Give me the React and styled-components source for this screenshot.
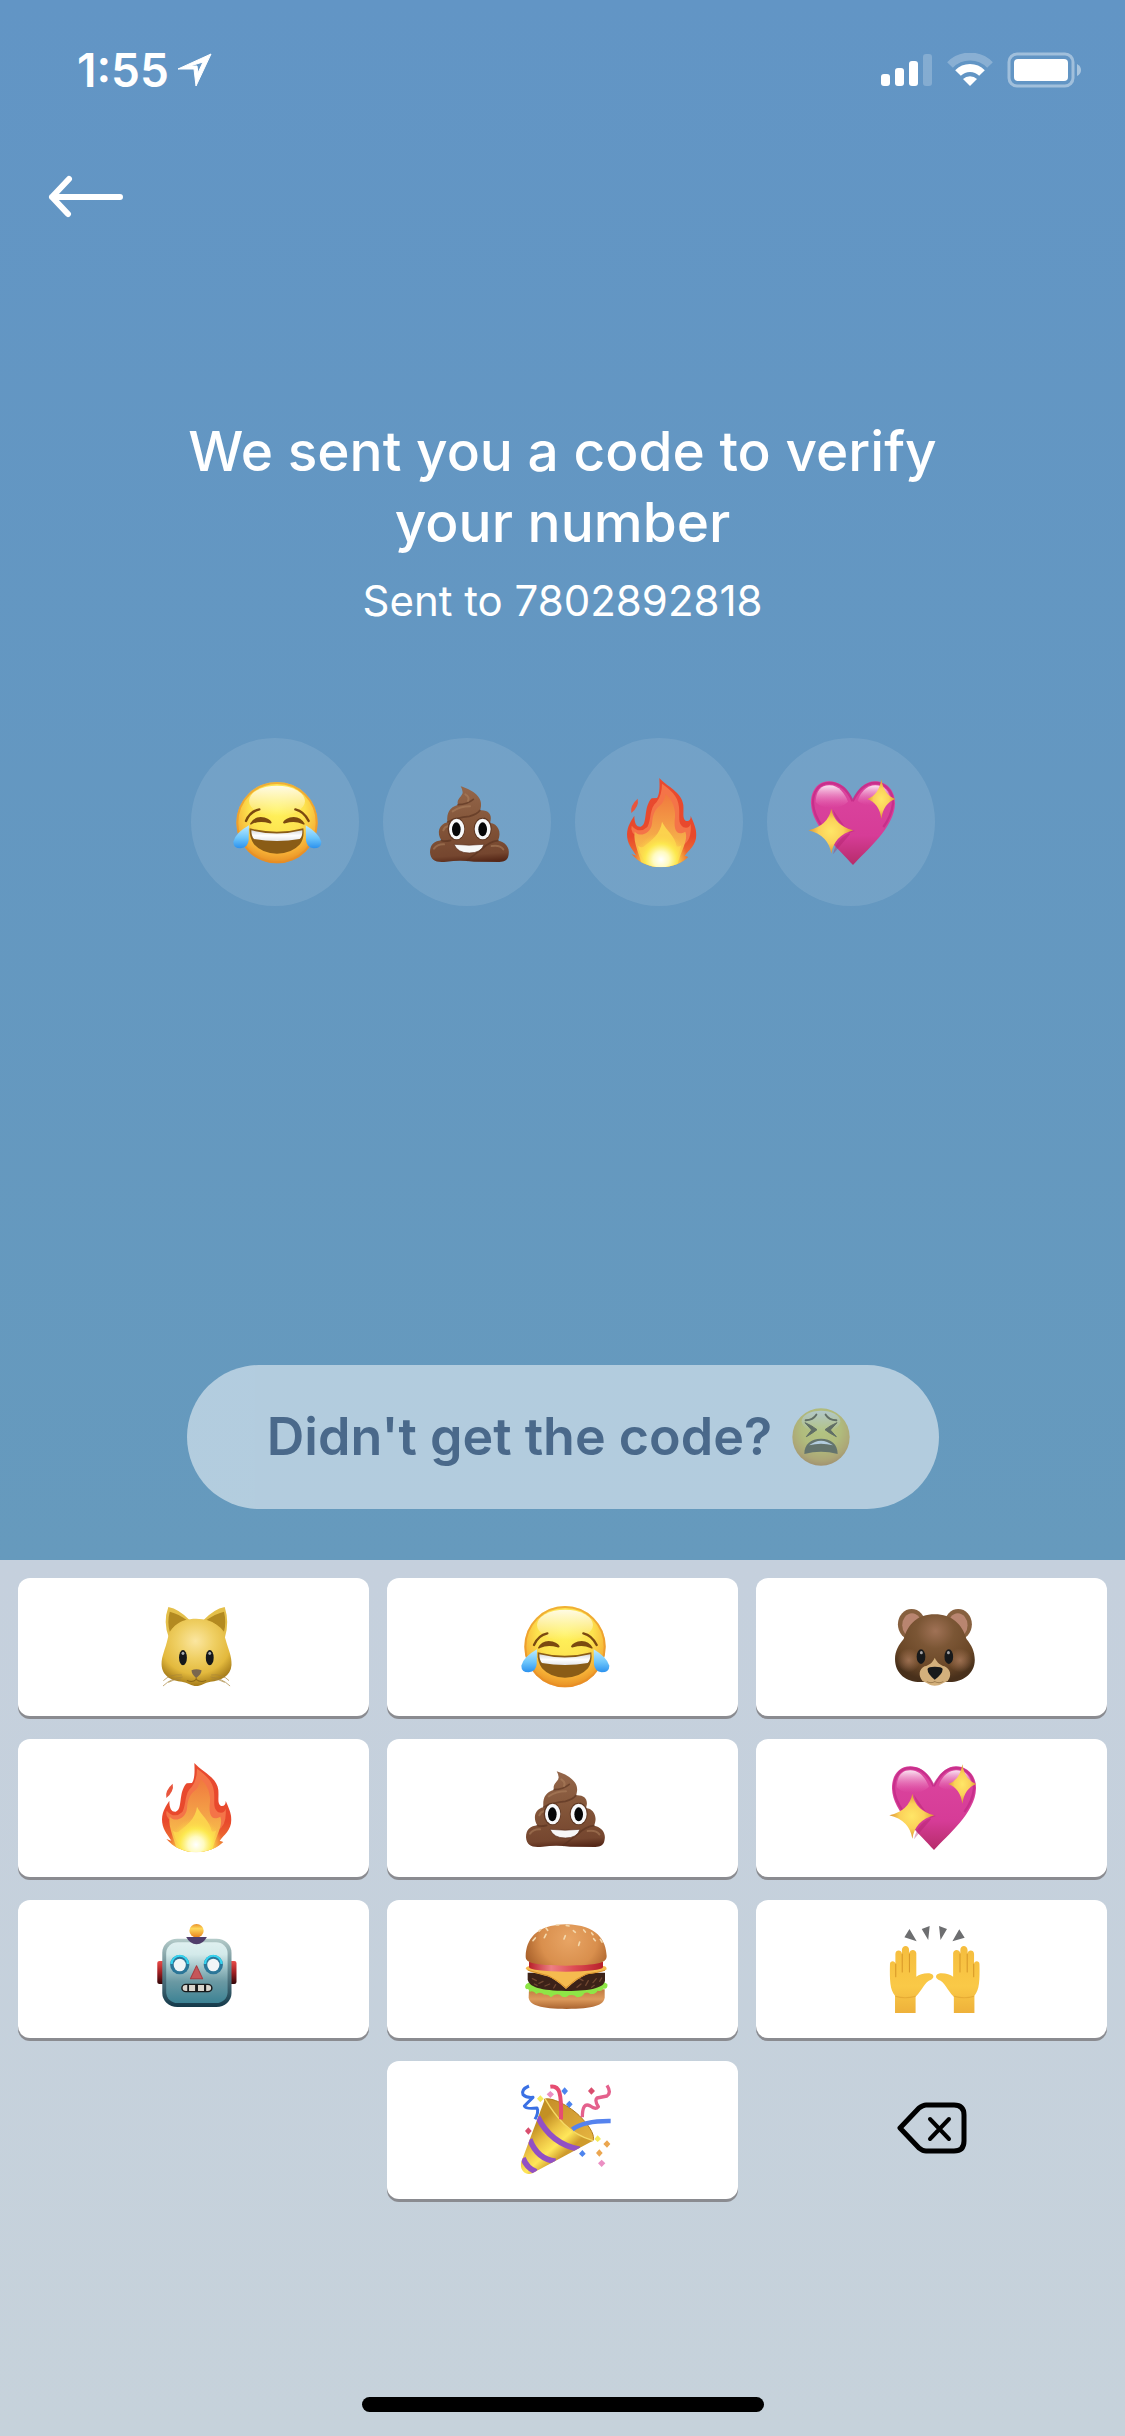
import React from "react";
import styled, { createGlobalStyle } from "styled-components";

const GlobalStyle = createGlobalStyle`
  *, *::before, *::after { box-sizing: border-box; }
  body { margin: 0; background: #c5d1db; }
  button { font: inherit; color: inherit; border: 0; padding: 0; background: none; cursor: pointer; }
`;

const Screen = styled.div`
  min-height: 100vh;
  display: flex;
  flex-direction: column;
  font-family: Inter, "Liberation Sans", sans-serif;
  color: #fff;
  background: linear-gradient(180deg, #6295c5 0, #669abd 1560px);
`;

const StatusBar = styled.header`
  display: flex;
  align-items: center;
  justify-content: space-between;
  height: 140px;
  padding: 0 44px 0 77px;
`;

const StatusGroup = styled.div`
  display: flex;
  align-items: center;
  gap: ${(p) => p.$gap}px;
`;

const Clock = styled.time`
  font-size: 46px;
  line-height: 52px;
  font-weight: 600;
`;

const Nav = styled.nav`
  display: flex;
  padding: 8px 24px;
`;

const BackButton = styled.button`
  display: flex;
  padding: 26px 24px;
`;

const Content = styled.main`
  flex: 1;
  display: flex;
  flex-direction: column;
  align-items: center;
  padding: 164px 24px 51px;
`;

const Title = styled.h1`
  max-width: 800px;
  margin: 0;
  font-size: 55px;
  line-height: 71px;
  font-weight: 500;
  text-align: center;
`;

const Subtitle = styled.p`
  margin: 17px 0 0;
  font-size: 42px;
  line-height: 52px;
  font-weight: 400;
`;

const CodeSlots = styled.ul`
  display: flex;
  gap: 24px;
  margin: 111px 0 64px;
  padding: 0;
  list-style: none;
`;

const Slot = styled.li`
  display: flex;
  align-items: center;
  justify-content: center;
  width: 168px;
  height: 168px;
  padding-left: 4px;
  border-radius: 50%;
  background: rgba(255, 255, 255, 0.1);
`;

const ResendButton = styled.button`
  display: flex;
  align-items: center;
  justify-content: center;
  gap: 20px;
  min-width: 752px;
  height: 144px;
  margin-top: auto;
  padding: 0 8px 0 0;
  border-radius: 72px;
  background: #fff;
  color: #303a59;
  opacity: 0.5;
  font-size: 52px;
  line-height: 64px;
  font-weight: 600;
`;

const Keyboard = styled.section`
  display: flex;
  flex-direction: column;
  align-items: center;
  padding: 18px 18px 24px;
  background: linear-gradient(180deg, #c5d0dd, #c6d2db);
`;

const KeyGrid = styled.div`
  display: grid;
  grid-template-columns: repeat(3, 1fr);
  gap: 23px 18px;
  width: 100%;
`;

const Key = styled.button`
  display: flex;
  align-items: center;
  justify-content: center;
  height: 138px;
  padding: 0 0 2px 4px;
  border-radius: 12px;
  background: #fff;
  box-shadow: 0 3px 0 #8a8b90;
`;

const DeleteKey = styled(Key)`
  padding: 0 0 4px;
  background: none;
  box-shadow: none;
`;

const Blank = styled.span``;

const HomeIndicator = styled.div`
  width: 402px;
  height: 15px;
  margin-top: 198px;
  border-radius: 8px;
  background: #000;
`;

const Picture = styled.svg`
  display: block;
  flex: none;
  width: ${(p) => p.$size}px;
  height: ${(p) => p.$size}px;
`;

/* Emoji artwork */

const JoyArt = () => (
  <>
    <defs>
      <radialGradient id="joyFace" gradientUnits="userSpaceOnUse" cx="291" cy="236" r="166">
        <stop offset="0" stopColor="#fff35c" />
        <stop offset=".5" stopColor="#fde24e" />
        <stop offset=".8" stopColor="#f6b036" />
        <stop offset="1" stopColor="#e58a22" />
      </radialGradient>
      <linearGradient id="joyShine" x1="0" y1="0" x2="0" y2="1">
        <stop offset="0" stopColor="#fff" stopOpacity=".85" />
        <stop offset="1" stopColor="#fff" stopOpacity="0" />
      </linearGradient>
      <linearGradient id="joyTear" x1="0" y1="0" x2="0" y2="1">
        <stop offset="0" stopColor="#bdebff" />
        <stop offset=".55" stopColor="#6cc5fb" />
        <stop offset="1" stopColor="#2b91ee" />
      </linearGradient>
      <linearGradient id="joyTeeth" x1="0" y1="0" x2="0" y2="1">
        <stop offset="0" stopColor="#d9dadd" />
        <stop offset=".5" stopColor="#fff" />
        <stop offset="1" stopColor="#e4e5e8" />
      </linearGradient>
    </defs>
    <circle cx="291" cy="277" r="122" fill="url(#joyFace)" />
    <circle cx="291" cy="277" r="119" fill="none" stroke="#e88c24" strokeWidth="6" opacity=".6" />
    <ellipse cx="291" cy="212" rx="84" ry="46" fill="url(#joyShine)" />
    <path d="M198 272Q210 243 238 237M386 272Q372 243 346 237" fill="none" stroke="#7b4a10" strokeWidth="7" strokeLinecap="round" />
    <path d="M210 280Q220 261 242 260Q268 262 275 276Q274 281 268 279Q240 270 216 281Q210 285 210 280Z" fill="#7b4a10" />
    <path d="M374 280Q363 261 341 260Q316 262 309 276Q310 281 316 279Q344 270 367 281Q374 285 374 280Z" fill="#7b4a10" />
    <path d="M209 294Q291 315 370 294Q374 322 360 342Q335 370 291 370Q247 370 222 342Q207 320 209 294Z" fill="#8a5c16" />
    <path d="M214 300Q291 319 367 300Q368 318 359 326Q291 338 222 326Q214 318 214 300Z" fill="url(#joyTeeth)" />
    <path d="M207 285Q166 308 160 334Q160 354 182 354Q204 352 206 330Z" fill="url(#joyTear)" />
    <path d="M377 285Q416 308 424 334Q424 354 401 354Q380 352 378 330Z" fill="url(#joyTear)" />
  </>
);

const PoopArt = () => (
  <>
    <defs>
      <linearGradient id="poopBody" gradientUnits="userSpaceOnUse" x1="850" y1="170" x2="866" y2="396">
        <stop offset="0" stopColor="#94664a" />
        <stop offset=".5" stopColor="#835539" />
        <stop offset=".9" stopColor="#75462f" />
        <stop offset="1" stopColor="#562818" />
      </linearGradient>
    </defs>
    <path
      d="M842 168C870 176 908 196 903 228Q902 236 900 240C922 238 936 250 932 270L930 278C954 280 966 306 954 331C974 334 990 350 986 372C984 390 974 395 958 395L882 394Q840 388 800 394C770 398 752 392 750 366C750 342 764 332 784 330C770 308 776 282 802 276C800 246 808 232 834 223C828 206 848 198 848 186Q847 176 842 168Z"
      fill="url(#poopBody)"
    />
    <path d="M834 223Q862 222 880 207M803 275Q830 262 868 258Q892 252 900 240M784 330Q792 335 812 330M930 278Q920 275 914 264M954 331Q930 333 904 357L862 390" fill="none" stroke="#57301e" strokeWidth="5" strokeLinecap="round" opacity=".6" />
    <path d="M818 243Q840 228 870 228M856 192Q870 200 864 212M762 355Q772 341 792 342M790 300Q794 289 804 288M935 347Q960 343 970 357" fill="none" stroke="#b18662" strokeWidth="6" strokeLinecap="round" opacity=".5" />
    <ellipse cx="829" cy="296" rx="26" ry="34" fill="#5d3723" />
    <ellipse cx="908" cy="296" rx="27" ry="34" fill="#5d3723" />
    <ellipse cx="830" cy="296" rx="23" ry="31" fill="#f7f8fa" />
    <ellipse cx="908" cy="296" rx="24" ry="31" fill="#f7f8fa" />
    <ellipse cx="829" cy="297" rx="13" ry="21" fill="#050608" />
    <ellipse cx="908" cy="297" rx="13" ry="21" fill="#050608" />
    <path d="M822 342Q868 347 912 342Q904 368 868 368Q832 368 822 342Z" fill="#f7f7f7" stroke="#5b311f" strokeWidth="2" />
  </>
);

const FireArt = () => (
  <>
    <defs>
      <linearGradient id="fireOuter" x1="0" y1="0" x2="0" y2="1">
        <stop offset="0" stopColor="#e84a30" />
        <stop offset=".65" stopColor="#e8492c" />
        <stop offset="1" stopColor="#f08a35" />
      </linearGradient>
      <linearGradient id="fireInner" x1="0" y1="0" x2="0" y2="1">
        <stop offset="0" stopColor="#f0793e" />
        <stop offset=".5" stopColor="#f4a348" />
        <stop offset="1" stopColor="#fbd34e" />
      </linearGradient>
      <radialGradient id="fireGlow" gradientUnits="userSpaceOnUse" cx="303" cy="388" r="80">
        <stop offset="0" stopColor="#fff" />
        <stop offset=".3" stopColor="#fffbc0" />
        <stop offset=".6" stopColor="#fdec50" stopOpacity=".85" />
        <stop offset="1" stopColor="#fbc645" stopOpacity="0" />
      </radialGradient>
      <clipPath id="fireClip">
        <path d="M298 143C320 168 366 186 370 224C372 250 366 264 378 272C388 274 393 266 392 256C400 275 410 295 409 315C408 345 388 358 374 376L385 380C370 395 340 410 303 411C265 410 235 395 214 371L229 376C215 355 201 340 201 312C202 285 215 270 223 256C223 280 230 290 242 289C256 286 255 260 259 240C262 222 270 208 275 204L291 203C300 190 299 165 298 143Z" />
      </clipPath>
    </defs>
    <g clipPath="url(#fireClip)">
      <rect x="195" y="140" width="220" height="275" fill="url(#fireOuter)" />
      <path d="M306 160C330 178 354 195 357 230C360 260 352 278 370 291Q388 296 392 280Q396 330 368 345L330 320L240 320Q208 310 215 286Q238 312 262 290C274 270 268 232 290 215Q306 194 306 160Z" fill="#f47448" />
      <path d="M316 190C336 206 350 236 344 270C342 300 350 318 376 304C386 330 362 362 350 410L246 410C244 380 218 340 224 304C240 322 272 310 276 280C279 250 284 238 304 222Q315 208 316 190Z" fill="url(#fireInner)" />
      <path d="M306 274C318 300 345 316 350 348Q360 350 364 344Q352 392 330 410H274C252 394 240 372 234 346Q246 356 254 346C274 330 302 310 306 274Z" fill="#fdd94f" opacity=".85" />
      <rect x="195" y="290" width="220" height="125" fill="url(#fireGlow)" />
    </g>
    <path d="M233 205Q238 228 214 248Q209 226 233 205Z" fill="#e8553d" />
  </>
);

const HeartArt = () => (
  <>
    <defs>
      <linearGradient id="heartBody" x1="0" y1="0" x2="0" y2="1">
        <stop offset="0" stopColor="#dc459f" />
        <stop offset=".65" stopColor="#d63c97" />
        <stop offset="1" stopColor="#b62c6a" />
      </linearGradient>
      <linearGradient id="heartShine" x1="0" y1="0" x2="0" y2="1">
        <stop offset="0" stopColor="#fff" stopOpacity=".85" />
        <stop offset="1" stopColor="#ef78bf" stopOpacity="0" />
      </linearGradient>
      <radialGradient id="heartStar">
        <stop offset="0" stopColor="#ffe667" />
        <stop offset=".55" stopColor="#fbd159" />
        <stop offset="1" stopColor="#dc9332" />
      </radialGradient>
    </defs>
    <path d="M878 210C860 166 832 153 808 153C770 153 752 185 753 220C755 290 840 358 879 404C920 358 1003 292 1005 220C1006 176 975 153 945 153C915 153 895 176 878 210Z" fill="url(#heartBody)" />
    <path d="M878 213C860 171 834 158 808 158C774 158 758 188 759 220C761 246 772 268 786 288M878 213C895 177 918 158 945 158C974 158 1000 180 999 220C996 246 985 270 970 290" fill="none" stroke="#c22986" strokeWidth="7" opacity=".75" />
    <path d="M767 215C768 182 782 165 808 165C838 165 854 190 864 214C840 238 790 240 767 215Z" fill="url(#heartShine)" />
    <path d="M893 212C900 188 920 165 946 165C972 165 988 182 992 208C970 225 920 234 893 212Z" fill="url(#heartShine)" />
    <path d="M819 238Q828 286 884 302Q830 318 819 372L870 312Z" fill="#a81e68" opacity=".35" />
    <path d="M814 235Q823 285 880 300Q823 315 814 370Q805 315 745 300Q805 285 814 235Z" fill="url(#heartStar)" />
    <path d="M964 147Q971 194 1006 206Q971 218 964 265Q957 218 922 206Q957 194 964 147Z" fill="url(#heartStar)" />
  </>
);

const CatArt = () => (
  <>
    <defs>
      <radialGradient id="catFace" gradientUnits="userSpaceOnUse" cx="546" cy="276" r="132">
        <stop offset="0" stopColor="#fbe6a0" />
        <stop offset=".4" stopColor="#efcf63" />
        <stop offset=".75" stopColor="#e3b93d" />
        <stop offset="1" stopColor="#a97f1c" />
      </radialGradient>
    </defs>
    <path d="M470 174Q500 180 530 214L472 268Q454 220 470 174ZM628 174Q598 180 568 214L628 268Q642 220 628 174Z" fill="#e4bf4a" />
    <path d="M474 188Q500 195 522 214Q488 226 474 248Q466 220 474 188ZM626 188Q600 195 576 214Q612 226 626 248Q633 220 626 188Z" fill="#b38a21" />
    <path d="M548 209C596 209 622 234 630 270C638 302 648 320 647 348C645 382 616 396 588 398C572 401 562 411 548 411C536 411 524 401 508 398C480 396 452 382 451 346C451 320 462 300 468 270C476 234 500 209 548 209Z" fill="url(#catFace)" />
    <ellipse cx="511" cy="326" rx="11" ry="23" fill="#16181b" />
    <ellipse cx="586" cy="326" rx="11" ry="23" fill="#16181b" />
    <ellipse cx="511" cy="313" rx="4" ry="5" fill="#a7abb0" />
    <ellipse cx="586" cy="313" rx="4" ry="5" fill="#a7abb0" />
    <path d="M535 364Q548 357 563 364Q563 376 548 387Q535 376 535 364Z" fill="#7a674e" />
    <path d="M548 386V391M548 391Q538 402 522 394M548 391Q560 402 576 394" fill="none" stroke="#8d6919" strokeWidth="3" />
    <path d="M508 378Q476 374 456 395M510 384Q480 386 455 411M506 390Q486 390 470 400M590 378Q622 374 640 395M588 384Q618 386 643 411M592 390Q612 390 628 400" fill="none" stroke="#a8853a" strokeWidth="2" />
  </>
);

const BearArt = () => (
  <>
    <defs>
      <radialGradient id="bearFace" gradientUnits="userSpaceOnUse" cx="1040" cy="246" r="150">
        <stop offset="0" stopColor="#a07256" />
        <stop offset=".35" stopColor="#7b5635" />
        <stop offset=".75" stopColor="#6a4727" />
        <stop offset="1" stopColor="#48301b" />
      </radialGradient>
      <radialGradient id="bearCheek">
        <stop offset="0" stopColor="#a8795b" stopOpacity=".8" />
        <stop offset="1" stopColor="#a8795b" stopOpacity="0" />
      </radialGradient>
    </defs>
    <ellipse cx="974" cy="226" rx="38" ry="46" fill="#87603f" />
    <ellipse cx="1103" cy="226" rx="38" ry="46" fill="#87603f" />
    <ellipse cx="975" cy="229" rx="27" ry="36" fill="#b98570" />
    <ellipse cx="1102" cy="229" rx="27" ry="36" fill="#b98570" />
    <path d="M1038 196C1085 196 1114 225 1126 270C1140 288 1149 308 1149 333C1149 375 1115 399 1080 399H998C960 399 928 375 928 330C928 306 938 288 952 270C964 225 990 196 1038 196Z" fill="url(#bearFace)" />
    <ellipse cx="966" cy="334" rx="32" ry="36" fill="url(#bearCheek)" />
    <ellipse cx="1108" cy="334" rx="34" ry="36" fill="url(#bearCheek)" />
    <ellipse cx="1000" cy="323" rx="12" ry="22" fill="#17191b" />
    <ellipse cx="1077" cy="323" rx="12" ry="22" fill="#17191b" />
    <ellipse cx="1001" cy="311" rx="4" ry="5" fill="#a5a5a7" />
    <ellipse cx="1076" cy="311" rx="4" ry="5" fill="#a5a5a7" />
    <path d="M1038 326C1046 343 1054 348 1065 352C1082 360 1086 380 1074 396C1060 402 1054 410 1038 410C1024 410 1017 402 1004 396C992 380 994 360 1010 352C1022 348 1031 343 1038 326Z" fill="#d3b07c" />
    <path d="M1018 360Q1020 353 1038 353Q1058 353 1060 360Q1060 375 1038 392Q1018 375 1018 360Z" fill="#17191b" />
    <path d="M1016 398Q1028 404 1038 398Q1050 404 1062 398" fill="none" stroke="#9c7b4d" strokeWidth="3" />
  </>
);

const RobotArt = () => (
  <>
    <defs>
      <linearGradient id="robotFace" x1="0" y1="0" x2="0" y2="1">
        <stop offset="0" stopColor="#dff0f0" />
        <stop offset=".2" stopColor="#d3eaea" />
        <stop offset=".65" stopColor="#6a99a3" />
        <stop offset="1" stopColor="#3c8294" />
      </linearGradient>
      <linearGradient id="robotEdge" x1="0" y1="0" x2="0" y2="1">
        <stop offset="0" stopColor="#b5ccca" />
        <stop offset=".5" stopColor="#5a7f89" />
        <stop offset="1" stopColor="#14394a" />
      </linearGradient>
      <linearGradient id="robotEar" x1="0" y1="0" x2="0" y2="1">
        <stop offset="0" stopColor="#ea4b48" />
        <stop offset=".5" stopColor="#9f1e22" />
        <stop offset="1" stopColor="#330608" />
      </linearGradient>
      <linearGradient id="robotBall" x1="0" y1="0" x2="0" y2="1">
        <stop offset="0" stopColor="#e9912a" />
        <stop offset=".35" stopColor="#ffd95b" />
        <stop offset="1" stopColor="#e8821d" />
      </linearGradient>
    </defs>
    <rect x="439" y="243" width="24" height="69" rx="6" fill="url(#robotEar)" />
    <rect x="637" y="243" width="24" height="69" rx="6" fill="url(#robotEar)" />
    <rect x="453" y="176" width="194" height="205" rx="42" fill="url(#robotEdge)" />
    <rect x="464" y="187" width="172" height="182" rx="32" fill="url(#robotFace)" />
    <circle cx="549" cy="152" r="20" fill="url(#robotBall)" />
    <path d="M520 171H578Q568 192 549 193Q530 192 520 171Z" fill="#4f3d6b" />
    <ellipse cx="502" cy="254" rx="27" ry="29" fill="#2b7698" />
    <ellipse cx="596" cy="254" rx="27" ry="29" fill="#2b7698" />
    <path d="M479 252A23 25 0 0 1 525 252M573 252A23 25 0 0 1 619 252" fill="none" stroke="#35d4f0" strokeWidth="6" />
    <ellipse cx="502" cy="255" rx="17" ry="19" fill="#f0f5f7" />
    <ellipse cx="596" cy="255" rx="17" ry="19" fill="#f0f5f7" />
    <path d="M549 257L566 296H532Z" fill="#c5575a" stroke="#a93a40" strokeWidth="3" strokeLinejoin="round" />
    <rect x="506" y="311" width="88" height="26" rx="13" fill="#17191b" />
    <path d="M523 315H519Q510 315 510 324Q510 333 519 333H523ZM528 315H545V333H528ZM553 315H570V333H553ZM576 315H580Q590 315 590 324Q590 333 580 333H576Z" fill="#dad6ce" />
  </>
);

const BurgerArt = () => (
  <>
    <defs>
      <radialGradient id="bunTop" gradientUnits="userSpaceOnUse" cx="190" cy="88" r="140">
        <stop offset="0" stopColor="#e8a565" />
        <stop offset=".6" stopColor="#d98f4d" />
        <stop offset="1" stopColor="#a8602a" />
      </radialGradient>
      <linearGradient id="bunBottom" x1="0" y1="0" x2="0" y2="1">
        <stop offset="0" stopColor="#bf7a40" />
        <stop offset=".5" stopColor="#dd9a5c" />
        <stop offset="1" stopColor="#a9632f" />
      </linearGradient>
      <linearGradient id="tomato" x1="0" y1="0" x2="1" y2="0">
        <stop offset="0" stopColor="#b81f2a" />
        <stop offset=".3" stopColor="#ee7f84" />
        <stop offset=".6" stopColor="#de4d55" />
        <stop offset="1" stopColor="#b81f2a" />
      </linearGradient>
    </defs>
    <path d="M70 238H297V262C296 286 262 297 183 297C106 297 70 286 69 262Z" fill="url(#bunBottom)" />
    <path d="M62 222Q54 232 63 238Q70 235 72 246Q82 240 92 252Q104 244 116 254Q128 252 136 262Q148 250 162 254Q176 268 190 256Q204 252 214 262Q230 262 236 250Q246 244 254 252Q268 254 276 242Q288 246 292 236Q308 238 305 222L290 214H76Z" fill="#8ee646" />
    <path d="M66 188H298V212C294 232 262 242 182 243C104 242 70 232 66 208Z" fill="#3c2218" />
    <path d="M80 206L92 212M100 220L112 214M118 228L132 222M144 234L150 224M86 222L94 226M214 232L226 222M240 226L248 212M262 218L272 206M282 214L288 204M232 212L222 206M258 232L266 226" stroke="#704731" strokeWidth="4" strokeLinecap="round" />
    <path d="M60 176Q62 168 74 168H292Q303 168 303 178C290 188 256 190 242 194Q215 205 181 237Q145 205 125 199C100 190 70 188 60 176Z" fill="#f5bb4f" />
    <path d="M66 180Q110 193 128 197Q155 210 181 233Q212 204 242 192Q276 188 298 181" fill="none" stroke="#d9922d" strokeWidth="3" />
    <path d="M70 155H292V172Q286 184 181 185Q76 184 70 172Z" fill="url(#tomato)" />
    <path d="M60 138C62 92 86 45 181 43C276 45 301 92 303 138C303 160 278 165 181 167C82 165 59 160 60 138Z" fill="url(#bunTop)" />
    <path d="M82 92L89 84M116 83L121 73M121 54L126 61M175 87L179 77M203 62L209 67M152 45H159M182 46L190 48M219 106L222 96M234 60L239 66M258 69L262 74M264 86L269 92M284 88L289 96M100 63L105 59" stroke="#f4d8ac" strokeWidth="5" strokeLinecap="round" />
  </>
);

const PartyArt = () => (
  <>
    <defs>
      <linearGradient id="cone" gradientUnits="userSpaceOnUse" x1="85" y1="650" x2="165" y2="740">
        <stop offset="0" stopColor="#c39024" />
        <stop offset=".35" stopColor="#e9bf42" />
        <stop offset=".7" stopColor="#ffe75a" />
        <stop offset="1" stopColor="#cf9b2c" />
      </linearGradient>
      <linearGradient id="coneMouth" x1="0" y1="0" x2="1" y2="1">
        <stop offset="0" stopColor="#c58c28" />
        <stop offset="1" stopColor="#e6b540" />
      </linearGradient>
      <clipPath id="coneClip">
        <path d="M118 564C150 620 190 668 262 690L80 788C60 796 42 780 46 756Z" />
      </clipPath>
    </defs>
    <path d="M116 566C134 558 190 582 228 622C256 652 268 676 262 690C244 696 150 640 116 566Z" fill="url(#coneMouth)" stroke="#b17a1c" strokeWidth="3" />
    <g clipPath="url(#coneClip)">
      <rect x="40" y="560" width="230" height="235" fill="url(#cone)" />
      <path d="M96 618C120 668 160 704 222 716M72 686C88 728 112 748 150 752M52 742C60 764 72 776 92 784" fill="none" stroke="#9250c4" strokeWidth="17" />
    </g>
    <path d="M118 564C150 620 190 668 262 690" fill="none" stroke="#f6da65" strokeWidth="4" />
    <path d="M134 528C162 524 168 546 166 626" fill="none" stroke="#e64d72" strokeWidth="12" />
    <path d="M200 656Q236 630 315 631" fill="none" stroke="#5583ee" strokeWidth="14" />
    <path d="M70 526Q46 536 52 552Q62 562 82 560Q70 572 56 586Q60 596 94 592Q100 604 88 626" fill="none" stroke="#3a70e4" strokeWidth="9" strokeLinejoin="round" />
    <path d="M304 524Q318 546 304 556L274 562Q266 570 278 588Q270 598 254 586Q230 572 230 620" fill="none" stroke="#e4608c" strokeWidth="10" strokeLinejoin="round" />
    <path d="M177 530L187 541L177 553L167 541ZM191 570L201 581L191 592L181 581ZM230 718L240 729L230 739L220 729Z" fill="#4d84ee" />
    <path d="M104 554L114 564L104 575L94 564ZM276 674L286 685L276 694L266 685Z" fill="#f5ea59" />
    <path d="M134 541L145 551L134 562L123 551ZM288 747L299 758L288 769L277 758Z" fill="#eb8fc3" />
    <path d="M68 650L78 661L68 672L58 661ZM257 530L268 541L257 552L247 541Z" fill="#d94e6e" />
    <path d="M304 689L314 700L304 711L293 700ZM281 716L291 727L281 738L271 727Z" fill="#eba650" />
  </>
);

const Hand = () => (
  <>
    <path
      d="M928 399V347C914 330 913 300 914 252C914 241 929 241 929 252V222C929 208 947 208 947 222V210C948 194 967 194 967 210V220C970 205 987 208 987 220V290C995 284 1008 279 1023 280C1036 282 1038 294 1028 299C1010 305 1004 330 985 350V399Z"
      fill="url(#handSkin)"
    />
    <path d="M930 252V290M948 222V276M968 222V276" fill="none" stroke="#d99a29" strokeWidth="3" strokeLinecap="round" />
    <path d="M929 349Q955 358 985 349" fill="none" stroke="#dfa22f" strokeWidth="3" opacity=".7" />
  </>
);

const HandsArt = () => (
  <>
    <defs>
      <linearGradient id="handSkin" x1="0" y1="0" x2="0" y2="1">
        <stop offset="0" stopColor="#f5bd3e" />
        <stop offset=".6" stopColor="#fac947" />
        <stop offset="1" stopColor="#eeb13a" />
      </linearGradient>
    </defs>
    <Hand />
    <g transform="translate(2076 0) scale(-1 1)">
      <Hand />
    </g>
    <path d="M968 147L988 184L954 172ZM1002 147L1024 138L1020 180ZM1072 147L1050 138L1054 180ZM1106 148L1121 173L1087 184Z" fill="#6d6e70" />
  </>
);

const TiredArt = () => (
  <>
    <defs>
      <radialGradient id="tiredFace" gradientUnits="userSpaceOnUse" cx="128" cy="100" r="116">
        <stop offset="0" stopColor="#fff04a" />
        <stop offset=".5" stopColor="#fbdf3e" />
        <stop offset=".8" stopColor="#f2b432" />
        <stop offset="1" stopColor="#d98426" />
      </radialGradient>
      <linearGradient id="tiredShine" x1="0" y1="0" x2="0" y2="1">
        <stop offset="0" stopColor="#fff" stopOpacity=".8" />
        <stop offset="1" stopColor="#fff" stopOpacity="0" />
      </linearGradient>
    </defs>
    <circle cx="128" cy="125" r="86" fill="url(#tiredFace)" />
    <ellipse cx="128" cy="78" rx="58" ry="32" fill="url(#tiredShine)" />
    <path d="M82 75Q104 74 114 58M174 75Q152 74 142 58" fill="none" stroke="#5d4510" strokeWidth="6" strokeLinecap="round" />
    <path d="M80 82Q100 90 116 103Q102 114 84 124L100 104ZM176 82Q156 90 140 103Q154 114 174 124L156 104Z" fill="#5d4510" stroke="#5d4510" strokeWidth="3" strokeLinejoin="round" />
    <path d="M78 176C78 146 98 130 128 130C158 130 178 146 178 176Q128 162 78 176Z" fill="#64501f" />
    <path d="M92 150Q128 122 164 150Q128 140 92 150Z" fill="#fff" />
  </>
);

const ART = {
  joy: { name: "Face with tears of joy", box: "147 131 288 288", Art: JoyArt },
  poop: { name: "Pile of poo", box: "723 131 288 288", Art: PoopArt },
  fire: { name: "Fire", box: "159 131 288 288", Art: FireArt },
  heart: { name: "Sparkling heart", box: "735 131 288 288", Art: HeartArt },
  cat: { name: "Cat", box: "413 147 269 288", Art: CatArt },
  bear: { name: "Bear", box: "903 147 266 288", Art: BearArt },
  robot: { name: "Robot", box: "413 120 269 288", Art: RobotArt },
  burger: { name: "Hamburger", box: "34 30 288 288", Art: BurgerArt },
  hands: { name: "Raising hands", box: "903 120 266 288", Art: HandsArt },
  party: { name: "Party popper", box: "34 511 288 288", Art: PartyArt },
  tired: { name: "Tired face", box: "41 38 174 174", Art: TiredArt },
};

function Emoji({ kind, size = 96 }) {
  const { name, box, Art } = ART[kind];
  return (
    <Picture $size={size} viewBox={box} preserveAspectRatio="none" role="img" aria-label={name}>
      <Art />
    </Picture>
  );
}

const LocationIcon = () => (
  <svg width="36" height="36" viewBox="0 0 36 36" role="img" aria-label="Location in use">
    <path
      d="M34 2L1 17H17L19 34ZM26 10L21 21L20 14L13 14Z"
      fill="#fff"
      fillRule="evenodd"
      stroke="#fff"
      strokeWidth="1"
      strokeLinejoin="round"
    />
  </svg>
);

const SignalIcon = () => (
  <svg width="52" height="34" viewBox="0 0 52 34" fill="#fff" role="img" aria-label="Signal">
    <rect x="0" y="21" width="9" height="12" rx="3" />
    <rect x="14" y="15" width="9" height="18" rx="3" />
    <rect x="28" y="8" width="9" height="25" rx="3" />
    <rect x="42" y="1" width="9" height="32" rx="3" opacity=".22" />
  </svg>
);

const WifiIcon = () => (
  <svg width="46" height="34" viewBox="0 0 46 34" fill="none" stroke="#fff" role="img" aria-label="Wi-Fi">
    <path d="M3 12A28 28 0 0 1 43 12" strokeWidth="8" opacity=".25" />
    <path d="M11 20A17 17 0 0 1 35 20" strokeWidth="8" />
    <path d="M23 33L16 26A10 10 0 0 1 30 26Z" fill="#fff" stroke="none" />
  </svg>
);

const BatteryIcon = () => (
  <svg width="74" height="36" viewBox="0 0 74 36" fill="#fff" role="img" aria-label="Battery">
    <rect x="2" y="2" width="64" height="32" rx="8" fill="none" stroke="#fff" strokeWidth="3" opacity=".4" />
    <rect x="7" y="7" width="54" height="22" rx="4" />
    <path d="M70 12Q74 14 74 18Q74 22 70 24Z" opacity=".45" />
  </svg>
);

const BackIcon = () => (
  <svg width="76" height="44" viewBox="0 0 76 44" fill="none" stroke="#fff" strokeWidth="6" strokeLinecap="round" strokeLinejoin="round" aria-hidden="true">
    <path d="M72 23H4M21 5L4 23L20 40" />
  </svg>
);

const DeleteIcon = () => (
  <svg width="70" height="52" viewBox="0 0 70 52" fill="none" stroke="#000" strokeLinecap="round" strokeLinejoin="round" aria-hidden="true">
    <path d="M3 26L22 6Q26 3 29 3H57Q67 3 67 13V39Q67 49 57 49H29Q26 49 22 46Z" strokeWidth="5" />
    <path d="M33 17L52 37M52 17L33 37" strokeWidth="4" />
  </svg>
);

const CODE = ["joy", "poop", "fire", "heart"];
const KEYS = ["cat", "joy", "bear", "fire", "poop", "heart", "robot", "burger", "hands"];

export default function App() {
  return (
    <>
      <GlobalStyle />
      <Screen>
        <StatusBar>
          <StatusGroup $gap={8}>
            <Clock>1:55</Clock>
            <LocationIcon />
          </StatusGroup>
          <StatusGroup $gap={14}>
            <SignalIcon />
            <WifiIcon />
            <BatteryIcon />
          </StatusGroup>
        </StatusBar>
        <Nav>
          <BackButton type="button" aria-label="Back">
            <BackIcon />
          </BackButton>
        </Nav>
        <Content>
          <Title>We sent you a code to verify your number</Title>
          <Subtitle>Sent to 7802892818</Subtitle>
          <CodeSlots>
            {CODE.map((kind) => (
              <Slot key={kind}>
                <Emoji kind={kind} />
              </Slot>
            ))}
          </CodeSlots>
          <ResendButton type="button">
            Didn't get the code?
            <Emoji kind="tired" size={58} />
          </ResendButton>
        </Content>
        <Keyboard aria-label="Emoji keyboard">
          <KeyGrid>
            {KEYS.map((kind) => (
              <Key type="button" key={kind}>
                <Emoji kind={kind} />
              </Key>
            ))}
            <Blank />
            <Key type="button">
              <Emoji kind="party" />
            </Key>
            <DeleteKey type="button" aria-label="Delete">
              <DeleteIcon />
            </DeleteKey>
          </KeyGrid>
          <HomeIndicator />
        </Keyboard>
      </Screen>
    </>
  );
}
